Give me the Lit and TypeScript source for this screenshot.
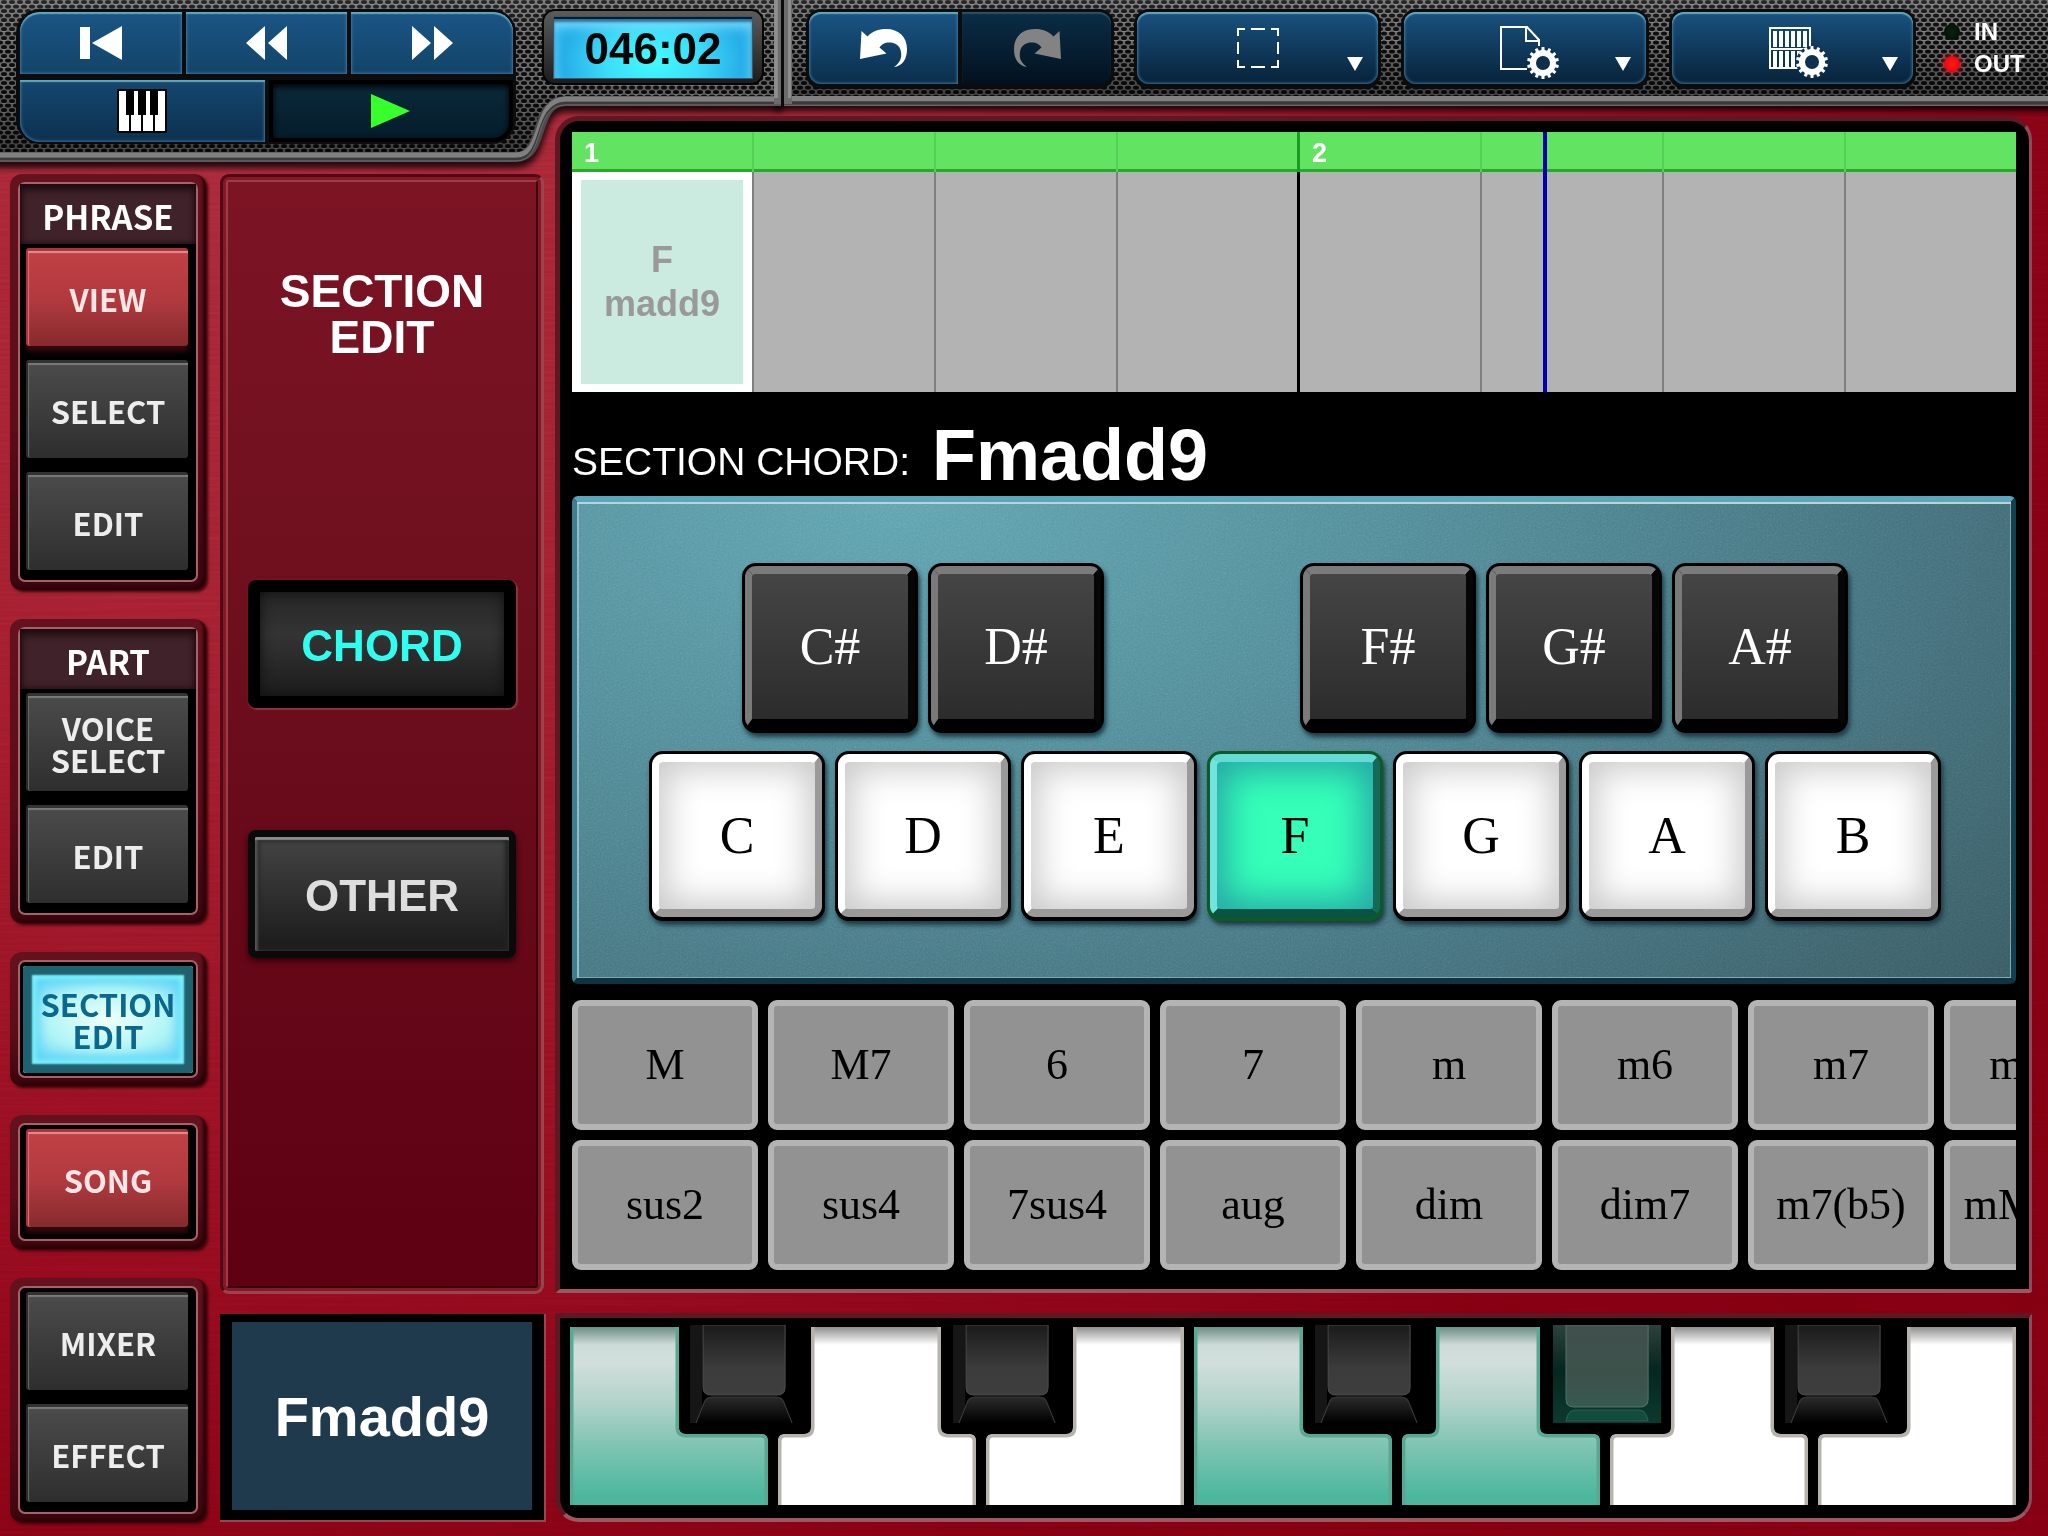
import { LitElement, html, svg, css } from "lit";
import { customElement, property } from "lit/decorators.js";
import { classMap } from "lit/directives/class-map.js";
import { styleMap } from "lit/directives/style-map.js";

const gearPoints = (cx: number, cy: number, teeth: number, outer: number, inner: number): string => {
  const points: string[] = [];
  const step = (Math.PI * 2) / teeth;
  for (let i = 0; i < teeth; i++) {
    const a = i * step - Math.PI / 2;
    const corners: [number, number][] = [
      [a - step * 0.28, inner],
      [a - step * 0.2, outer],
      [a + step * 0.2, outer],
      [a + step * 0.28, inner],
    ];
    for (const [t, r] of corners) {
      points.push(`${(cx + Math.cos(t) * r).toFixed(2)},${(cy + Math.sin(t) * r).toFixed(2)}`);
    }
  }
  return points.join(" ");
};

const gear = (cx: number, cy: number) => svg`<g stroke="none">
  <circle cx=${cx} cy=${cy} r="16" fill="#0d3350"></circle>
  <polygon points=${gearPoints(cx, cy, 14, 16, 13)} fill="#fff"></polygon>
  <circle cx=${cx} cy=${cy} r="7" fill="#0d304c"></circle></g>`;

const icons = {
  start: html`<svg width="42" height="34" viewBox="0 0 42 34" fill="#fff" aria-hidden="true">
    <rect y="1" width="10" height="32"></rect><path d="M12 17 42 0V34Z"></path></svg>`,
  rewind: html`<svg width="41" height="36" viewBox="0 0 41 36" fill="#fff" aria-hidden="true">
    <path d="M0 18 19 1V35ZM22 18 41 1V35Z"></path></svg>`,
  forward: html`<svg width="41" height="36" viewBox="0 0 41 36" fill="#fff" aria-hidden="true">
    <path d="M0 1 19 18 0 35ZM22 1 41 18 22 35Z"></path></svg>`,
  piano: html`<svg width="50" height="44" viewBox="0 0 50 44" aria-hidden="true">
    <rect width="50" height="44" fill="#050505"></rect>
    <path fill="#fff" d="M2 2H12V42H2ZM14 2H24V42H14ZM26 2H36V42H26ZM38 2H48V42H38Z"></path>
    <path fill="#000" d="M9 2H17V26H9ZM21 2H29V26H21ZM33 2H41V26H33Z"></path></svg>`,
  play: html`<svg width="40" height="36" viewBox="0 0 40 36" aria-hidden="true">
    <path fill="#36ff2b" d="M0 1 39 18 0 35Z"></path></svg>`,
  undo: html`<svg width="50" height="40" viewBox="0 0 50 40" fill="#fff" aria-hidden="true">
    <path d="M2.500 3 8.500 8.500C14 3 19 1 27 1 40 1 48 9 48 21 48 32 43 38 35 39 41 35 43 30 42 24 41 17 36 14.500 30 14.500 25.500 14.500 23 16 20.500 19.500L27.500 25.500 1 31Z"></path></svg>`,
  redo: html`<svg width="50" height="40" viewBox="0 0 50 40" fill="#838383" aria-hidden="true">
    <path d="M47.500 3 41.500 8.500C36 3 31 1 23 1 10 1 2 9 2 21 2 32 7 38 15 39 9 35 7 30 8 24 9 17 14 14.500 20 14.500 24.500 14.500 27 16 29.500 19.500L22.500 25.500 49 31Z"></path></svg>`,
  select: html`<svg width="42" height="40" viewBox="0 0 42 40" fill="none" stroke="#fff" stroke-width="2" aria-hidden="true">
    <path d="M1 8V1H8M14 1H28M34 1H41V8M41 14V26M41 32V39H34M28 39H14M8 39H1V32M1 26V14"></path></svg>`,
  file: html`<svg width="50" height="48" viewBox="0 0 50 48" overflow="visible" fill="none" stroke="#fff" stroke-width="2" aria-hidden="true">
    <path d="M27 45H1V3H27L39 16V22M26 3V17H39"></path>${gear(43, 39)}</svg>`,
  grid: html`<svg width="46" height="44" viewBox="0 0 46 44" overflow="visible" aria-hidden="true">
    <rect x="1" y="2" width="40" height="40" fill="none" stroke="#fff" stroke-width="2"></rect>
    <path stroke="#fff" stroke-width="4" d="M6 5V21M12 5V21M18 5V21M24 5V21M30 5V21M36 5V21M6 25V41M12 25V41M18 25V41M24 25V41M30 25V41"></path>
    <path stroke="#fff" stroke-width="2" d="M1 23H41"></path>${gear(43, 36)}</svg>`,
  caret: html`<svg width="16" height="14" viewBox="0 0 16 14" fill="#fff" aria-hidden="true"><path d="M0 0H16L8 14Z"></path></svg>`,
};

@customElement("chrome-plate")
export class ChromePlate extends LitElement {
  static styles = css`
    :host { display: block; position: absolute; inset: 0; }
    .plate { display: block; width: 100%; height: 190px; }
  `;

  render() {
    const edge = "M-10 157H516C546 157 532 101 566 101H782";
    return html`<svg class="plate" aria-hidden="true">
      <defs>
        <pattern id="mesh" width="8" height="9" patternUnits="userSpaceOnUse">
          <rect width="8" height="9" fill="#6d6d6d"></rect>
          <rect y="4" width="8" height="1" fill="#858585"></rect>
          <ellipse cx="4" cy="2" rx="3" ry="2" fill="#0d0d0d"></ellipse>
          <ellipse cx="0" cy="6.500" rx="3" ry="2" fill="#0d0d0d"></ellipse>
          <ellipse cx="8" cy="6.500" rx="3" ry="2" fill="#0d0d0d"></ellipse>
        </pattern>
        <linearGradient id="dim" x2="0" y2="1">
          <stop offset="0" stop-color="#fff" stop-opacity=".12"></stop>
          <stop offset=".4" stop-color="#000" stop-opacity="0"></stop>
          <stop offset="1" stop-color="#000" stop-opacity=".45"></stop>
        </linearGradient>
        <filter id="soft" x="-5%" y="-50%" width="110%" height="200%"><feGaussianBlur stdDeviation="3"></feGaussianBlur></filter>
      </defs>
      <path d=${edge} transform="translate(0 5)" fill="none" stroke="#000" stroke-opacity=".8" stroke-width="12" filter="url(#soft)"></path>
      <rect x="775" y="100" width="100%" height="11" fill="#000" opacity=".8" filter="url(#soft)"></rect>
      <path d="M0 0H782V101H566C532 101 546 157 516 157H0Z" fill="url(#mesh)"></path>
      <rect x="782" width="100%" height="101" fill="url(#mesh)"></rect>
      <path d="M0 0H782V101H566C532 101 546 157 516 157H0Z" fill="url(#dim)"></path>
      <rect x="782" width="100%" height="101" fill="url(#dim)"></rect>
      <g fill="none">
        <path d=${edge} stroke="#4b4b4b" stroke-width="10"></path>
        <path d=${edge} transform="translate(0 -2)" stroke="#808080" stroke-width="5"></path>
        <path d=${edge} transform="translate(0 2)" stroke="#3a3a3a" stroke-width="2"></path>
        <path d=${edge} transform="translate(0 4)" stroke="#686868" stroke-width="1"></path>
      </g>
      <rect x="784" y="96" width="100%" height="10" fill="#4b4b4b"></rect>
      <rect x="784" y="96" width="100%" height="5" fill="#808080"></rect>
      <rect x="784" y="102" width="100%" height="2" fill="#3a3a3a"></rect>
      <rect x="784" y="105" width="100%" height="1" fill="#686868"></rect>
      <rect x="774" width="8" height="104" fill="#6b6b6b"></rect>
      <rect x="774" width="4" height="98" fill="#8d8d8d"></rect>
      <rect x="784" width="8" height="104" fill="#6b6b6b"></rect>
      <rect x="788" width="3" height="98" fill="#8d8d8d"></rect>
      <rect x="781" width="3" height="107" fill="#0a0a0a"></rect>
    </svg>`;
  }
}

@customElement("top-bar")
export class TopBar extends LitElement {
  static styles = css`
    :host { display: block; position: relative; height: 162px; }
    .bar { position: relative; display: flex; align-items: flex-start; padding: 9px 22px 0 16px; }
    button {
      display: flex; align-items: center; justify-content: center; margin: 0; padding: 0; border: 0;
      background: linear-gradient(#1a5585, #124468);
      box-shadow: inset 0 2px 1px #5da9be, inset 0 0 3px 1px #3c7398;
    }
    .transport {
      flex: none; width: 500px; box-sizing: border-box; display: grid; grid-template-columns: repeat(6, 1fr);
      gap: 6px 4px; padding: 3px 3px 2px 4px; grid-auto-rows: 62px; background: #0c0c0e; border-radius: 24px;
    }
    .third { grid-column: span 2; }
    .half { grid-column: span 3; }
    .first { border-top-left-radius: 20px; }
    .last { border-top-right-radius: 20px; }
    .keys { border-bottom-left-radius: 20px; background: linear-gradient(#15466f, #0c3150); }
    .play {
      border-bottom-right-radius: 20px; border: 4px solid #000;
      background: linear-gradient(#0a2a3a, #051c2b); box-shadow: inset 0 3px 6px #000;
    }
    .lcd {
      flex: none; margin-left: 26px; width: 222px; height: 76px; box-sizing: border-box; padding: 6px 10px 5px;
      border: 2px solid #050505; border-radius: 13px; background: linear-gradient(#5c5c5c, #1c1c1c);
    }
    .time {
      display: block; height: 59px; text-align: center; color: #050505;
      font: bold 44px/60px "Liberation Sans", Arial, sans-serif;
      background: radial-gradient(ellipse 45% 110% at 50% 70%, #43fbff, #3bdcf8 55%, #27aee8);
      box-shadow: inset 0 3px 3px #2a6f9a, 0 0 0 1px #39566a, inset 0 8px 12px #7cdcff;
      border-top: 2px solid #0b1c28;
    }
    .tools { flex: 1; display: flex; align-items: flex-start; gap: 20px; margin-left: 42px; }
    .group {
      display: flex; gap: 4px; box-sizing: border-box; height: 80px; padding: 3px 3px 5px;
      background: #0b0c0e; border-radius: 15px;
    }
    .history { flex: none; width: 308px; }
    .history button { flex: 1; background: linear-gradient(#1a5585, #0a2e4b); }
    .undo { border-radius: 12px 0 0 12px; }
    .history .redo { border-radius: 0 12px 12px 0; background: linear-gradient(#0a2d47, #03111f); box-shadow: inset 0 2px 1px #2a5262; }
    .menu { flex: 1; }
    .menu button {
      flex: 1; display: grid; grid-template-columns: 1fr auto 1fr; padding: 0 15px; border-radius: 12px;
      background: linear-gradient(#19527f, #07223a);
    }
    .icon { grid-column: 2; display: flex; }
    .caret { justify-self: end; align-self: end; display: flex; padding-bottom: 13px; }
    .leds {
      flex: none; display: grid; grid-template-columns: 16px auto; gap: 4px 14px; align-items: center;
      width: 82px; margin: 9px 0 0 8px; color: #fff; font: bold 24px/28px "Liberation Sans", Arial, sans-serif;
    }
    .led { width: 16px; height: 16px; border-radius: 50%; background: radial-gradient(#07230b, #020d03); }
    .lit { background: radial-gradient(#ff1a1a, #e00010); box-shadow: 0 0 6px 1px #d0202c; }
    .word { white-space: nowrap; }
  `;

  private menu(label: string, icon: unknown) {
    return html`<div class="group menu"><button aria-label=${label} aria-haspopup="menu">
      <span class="icon">${icon}</span><span class="caret">${icons.caret}</span></button></div>`;
  }

  render() {
    return html`<chrome-plate></chrome-plate>
      <div class="bar">
        <div class="transport">
          <button class="third first" aria-label="Return to start">${icons.start}</button>
          <button class="third" aria-label="Rewind">${icons.rewind}</button>
          <button class="third last" aria-label="Fast forward">${icons.forward}</button>
          <button class="half keys" aria-label="Keyboard">${icons.piano}</button>
          <button class="half play" aria-label="Play" aria-pressed="true">${icons.play}</button>
        </div>
        <div class="lcd"><output class="time">046:02</output></div>
        <div class="tools">
          <div class="group history">
            <button class="undo" aria-label="Undo">${icons.undo}</button>
            <button class="redo" aria-label="Redo">${icons.redo}</button>
          </div>
          ${this.menu("Selection", icons.select)}
          ${this.menu("File settings", icons.file)}
          ${this.menu("Grid settings", icons.grid)}
          <div class="leds">
            <span class="led"></span><span class="word">IN</span>
            <span class="led lit"></span><span class="word">OUT</span>
          </div>
        </div>
      </div>`;
  }
}

type NavItem = { lines: string[]; tone: "dark" | "red" | "lit" };
type NavGroup = { title?: string; items: NavItem[] };

const NAV: NavGroup[] = [
  {
    title: "PHRASE",
    items: [
      { lines: ["VIEW"], tone: "red" },
      { lines: ["SELECT"], tone: "dark" },
      { lines: ["EDIT"], tone: "dark" },
    ],
  },
  {
    title: "PART",
    items: [
      { lines: ["VOICE", "SELECT"], tone: "dark" },
      { lines: ["EDIT"], tone: "dark" },
    ],
  },
  { items: [{ lines: ["SECTION", "EDIT"], tone: "lit" }] },
  { items: [{ lines: ["SONG"], tone: "red" }] },
  {
    items: [
      { lines: ["MIXER"], tone: "dark" },
      { lines: ["EFFECT"], tone: "dark" },
    ],
  },
];

@customElement("side-nav")
export class SideNav extends LitElement {
  static styles = css`
    :host { display: block; }
    .nav { display: flex; flex-direction: column; gap: 29px; font: bold 31px/32px "Noto Sans CJK JP", "Liberation Sans", sans-serif; }
    .frame {
      padding: 8px; border-radius: 12px; background: linear-gradient(#64121d, #5c0d18 60%, #3a060d);
      box-shadow: 2px 2px 3px 0 #3d0309, inset -3px -3px 3px #2a0307;
    }
    .well {
      display: flex; flex-direction: column; gap: 14px; padding: 4px 8px 10px 6px;
      border: 2px solid #a9606a; border-radius: 7px; background: #000;
    }
    .titled { padding-top: 0; gap: 14px; }
    .title {
      margin: 0 -8px -10px -6px; height: 60px; line-height: 64px; color: #fff; text-align: center; font-size: 33px;
      background: #40232a; box-shadow: inset 0 5px 8px #1b0a0d, inset 0 0 6px #1b0a0d;
      font-weight: bold;
    }
    button {
      height: 98px; margin: 0; padding: 0; border: 0; border-radius: 3px; font: inherit; color: #ededed;
      border-top: 3px solid #333; border-left: 2px solid #2a2a2a;
    }
    .line { display: block; }
    .dark { background: linear-gradient(#4b4b4b, #2e2e2e); box-shadow: inset 0 3px 1px -1px #7a7a7a, inset 2px 0 1px -1px #6a6a6a; }
    .red {
      background: linear-gradient(#c04045, #b23a3f 50%, #862a2d); color: #fbe6e6; border-color: #a8353b;
      box-shadow: inset 0 3px 1px -1px #e48b8e, inset 2px 0 1px -1px #dd7478, 0 6px 4px #30090c;
    }
    .lit {
      height: 107px; margin: 0 -5px -9px -3px; color: #0c678d; border: 0;
      background: radial-gradient(ellipse 75% 60% at 50% 50%, #f0fff9, #aef4f6 50%, #45c3f6);
      box-shadow: inset 0 0 2px 9px #21606f, inset 0 0 5px 13px #7df3fb, inset 0 0 12px 16px #5cd4f8;
    }
    .single { padding-bottom: 12px; }
  `;

  render() {
    return html`<nav class="nav">
      ${NAV.map(
        (group) => html`<div class="frame">
          <div class=${classMap({ well: true, titled: !!group.title, single: group.items.length === 1 })}>
            ${group.title ? html`<div class="title">${group.title}</div>` : ""}
            ${group.items.map(
              (item) => html`<button class=${item.tone}>${item.lines.map((l) => html`<span class="line">${l}</span>`)}</button>`,
            )}
          </div>
        </div>`,
      )}
    </nav>`;
  }
}

@customElement("section-panel")
export class SectionPanel extends LitElement {
  static styles = css`
    :host { display: flex; flex-direction: column; gap: 20px; padding-bottom: 2px; font-family: "Liberation Sans", Arial, sans-serif; }
    .outer {
      flex: 1; display: flex; padding: 3px; border: 3px solid; border-color: #4d0b16 #9a4450 #9a4450 #4d0b16;
      border-radius: 9px; background: #8a1625;
    }
    .inner {
      flex: 1; display: flex; flex-direction: column; align-items: center; border: 2px solid;
      border-color: #96404c #36050c #2c0308 #96404c; border-radius: 3px;
      background: linear-gradient(#7c1424, #6e0f1e 40%, #5e0012);
    }
    .heading { margin: 86px 0 0; color: #fff; font-size: 46px; line-height: 46px; text-align: center; width: min-content; }
    button { box-sizing: border-box; width: 268px; height: 128px; padding: 3px 0 0; border-radius: 8px; font: bold 44px/50px "Liberation Sans", Arial, sans-serif; }
    .chord {
      margin: 220px 0 0; color: #2fffef; border: 12px solid #000; background: linear-gradient(#252525, #343434 40%, #1c1c1c);
      box-shadow: inset 0 0 12px #101010, 1px 1px 1px 1px #8e3340;
    }
    .other {
      margin: 122px 0 0; color: #dedede; border: 7px solid #0a0a0a; background: linear-gradient(#444, #1b1b1b);
      box-shadow: inset 0 3px 1px #8a8a8a, inset 3px 0 2px #4d4d4d, inset 0 0 4px 4px #222, 0 3px 6px #2d0207;
    }
    .display {
      box-sizing: border-box; height: 206px; display: flex; align-items: center; justify-content: center;
      border: solid #000; border-width: 8px 12px 10px; background: #1e3a4c; color: #fff; font-size: 56px; font-weight: bold;
      box-shadow: 1px 1px 0 1px #9c4450;
    }
  `;

  render() {
    return html`<div class="outer"><div class="inner">
        <h1 class="heading">SECTION EDIT</h1>
        <button class="chord" aria-pressed="true">CHORD</button>
        <button class="other">OTHER</button>
      </div></div>
      <output class="display">Fmadd9</output>`;
  }
}

@customElement("chord-timeline")
export class ChordTimeline extends LitElement {
  @property({ type: Number }) beat = 5.335;

  static styles = css`
    :host { display: block; position: relative; overflow: hidden; height: 260px; background: #b3b3b3; font-family: "Liberation Sans", Arial, sans-serif; }
    .row { display: flex; }
    .cell { flex: none; box-sizing: border-box; width: 182px; border-right: 2px solid #7f7f7f; height: 220px; }
    .head .cell { height: 40px; border-color: #55cf55; padding-left: 12px; color: #fff; font: bold 27px/42px "Liberation Sans", Arial, sans-serif; }
    .head { background: #62e362; box-shadow: inset 0 -3px 0 #2ba82b; }
    .bar { border-right: 3px solid #000; }
    .head .bar { border-color: #1c9b22; }
    .chosen { background: #fff; padding: 8px 9px 8px 9px; }
    .chord {
      width: 100%; height: 100%; display: flex; flex-direction: column; align-items: center; justify-content: center; padding: 0;
      border: 0; background: #ccebe0; color: #999; font: bold 36px/44px "Liberation Sans", Arial, sans-serif;
    }
    .playhead { position: absolute; top: 0; bottom: 0; width: 4px; background: #0000ad; }
  `;

  render() {
    const cells = [0, 1, 2, 3, 4, 5, 6, 7];
    const kind = (i: number) => classMap({ cell: true, bar: i % 4 === 3, chosen: i === 0 });
    return html`<div class="row head">
        ${cells.map((i) => html`<div class=${classMap({ cell: true, bar: i % 4 === 3 })}>${i % 4 === 0 ? i / 4 + 1 : ""}</div>`)}
      </div>
      <div class="row">
        ${cells.map(
          (i) => html`<div class=${kind(i)}>${i === 0 ? html`<button class="chord"><span>F</span><span>madd9</span></button>` : ""}</div>`,
        )}
      </div>
      <div class="playhead" style=${styleMap({ left: `${Math.round(this.beat * 182)}px` })}></div>`;
  }
}

const ROOTS: { name: string; col: number; sharp?: boolean }[] = [
  { name: "C#", col: 2, sharp: true },
  { name: "D#", col: 4, sharp: true },
  { name: "F#", col: 8, sharp: true },
  { name: "G#", col: 10, sharp: true },
  { name: "A#", col: 12, sharp: true },
  { name: "C", col: 1 },
  { name: "D", col: 3 },
  { name: "E", col: 5 },
  { name: "F", col: 7 },
  { name: "G", col: 9 },
  { name: "A", col: 11 },
  { name: "B", col: 13 },
];

const KINDS: string[][] = [
  ["M", "M7", "6", "7", "m", "m6", "m7", "mM7"],
  ["sus2", "sus4", "7sus4", "aug", "dim", "dim7", "m7(b5)", "mM7(9)"],
];

@customElement("chord-editor")
export class ChordEditor extends LitElement {
  static styles = css`
    :host { flex: 1; display: flex; flex-direction: column; font-family: "Liberation Serif", "Times New Roman", serif; }
    .pad {
      flex: 1; position: relative; display: grid; align-content: center; justify-content: center; box-sizing: border-box;
      grid-template-columns: repeat(14, minmax(0, 83px)); grid-auto-rows: 170px; gap: 18px 10px; padding: 4px 0 0 2px;
      border: solid; border-width: 6px 5px; border-color: #5aa6ba #12404c #10343f #3d7f90; border-radius: 6px;
      background: radial-gradient(ellipse 100% 160% at 22% 0, #5fa2af, #528a97 35%, #477480 65%, #3a5a62);
      box-shadow: inset 0 2px 0 #b9cfd3, inset 2px 0 0 #8cb6be, inset -1px -1px 0 #78a0a8;
    }
    .grain { position: absolute; inset: 0; width: 100%; height: 100%; opacity: 0.3; mix-blend-mode: overlay; }
    .root {
      position: relative; margin: 0; padding: 0; grid-column-end: span 2; border-radius: 14px; font: 52px/60px "Liberation Serif", "Times New Roman", serif;
      border: 3px solid #000; border-bottom-width: 4px; color: #000; background: #000;
      display: flex; align-items: center; justify-content: center; box-shadow: 2px 4px 5px #1b3a44;
    }
    .face {
      flex: 1; align-self: stretch; display: flex; align-items: center; justify-content: center; border: solid; border-width: 8px 7px;
      border-radius: 11px; border-color: #fff #9a9a9a #9a9a9a #fff;
      background: #fff; box-shadow: inset 0 0 34px 7px #cac8c8;
    }
    .sharp { color: #fff; }
    .sharp .face {
      border-color: #7b7b7b #060606 #000 #7a7a7a; border-bottom-width: 10px;
      background: linear-gradient(#454545, #2c2c2c); box-shadow: none;
    }
    .active { border-color: #0c5b26; background: #0c5b26; }
    .active .face {
      border-color: #64dcd5 #17685a #0a5245 #72e3de; background: #35ffb9; box-shadow: inset 0 0 34px 10px #26a9a6;
    }
    .kinds { display: grid; gap: 10px; margin-top: 16px; overflow: hidden; }
    .row { display: flex; gap: 10px; }
    .kind {
      flex: none; box-sizing: border-box; width: 186px; height: 130px; margin: 0; padding: 0; border: 6px solid #b4b4b4; border-radius: 9px;
      background: #929292; color: #000; font: 44px/50px "Liberation Serif", "Times New Roman", serif; white-space: nowrap;
    }
  `;

  render() {
    return html`<div class="pad">
        <svg class="grain" aria-hidden="true">
          <filter id="grain"><feTurbulence type="fractalNoise" baseFrequency="0.6" numOctaves="2"></feTurbulence><feColorMatrix type="saturate" values="0"></feColorMatrix></filter>
          <rect width="100%" height="100%" filter="url(#grain)"></rect>
        </svg>
        ${ROOTS.map(
          (r) => html`<button
            class=${classMap({ root: true, sharp: !!r.sharp, active: r.name === "F" })}
            style=${styleMap({ gridColumnStart: String(r.col), gridRow: r.sharp ? "1" : "2" })}
          ><span class="face">${r.name}</span></button>`,
        )}
      </div>
      <div class="kinds">
        ${KINDS.map((row) => html`<div class="row">${row.map((k) => html`<button class="kind">${k}</button>`)}</div>`)}
      </div>`;
  }
}

type WhiteKey = { note: string; left: number; right: number; on?: boolean };
const WHITES: WhiteKey[] = [
  { note: "C", left: 0, right: 109, on: true },
  { note: "D", left: 33, right: 163 },
  { note: "E", left: 87, right: 198 },
  { note: "F", left: 0, right: 109, on: true },
  { note: "G", left: 34, right: 138, on: true },
  { note: "A", left: 61, right: 164 },
  { note: "B", left: 89, right: 198 },
];
const BLACKS: { note: string; x: number; on?: boolean }[] = [
  { note: "C#", x: 109 },
  { note: "D#", x: 372 },
  { note: "F#", x: 733 },
  { note: "G#", x: 970, on: true },
  { note: "A#", x: 1203 },
];

@customElement("piano-keys")
export class PianoKeys extends LitElement {
  static styles = css`
    :host { display: block; position: relative; }
    .whites { display: grid; grid-template-columns: repeat(7, 1fr); gap: 10px; }
    button { display: block; margin: 0; padding: 0; border: 0; background: none; }
    .shape { display: block; width: 100%; height: 178px; }
    .black { position: absolute; top: -2px; width: 9%; height: 108px; }
    .cap { display: block; width: 100%; height: 108px; }
  `;

  private white(k: WhiteKey) {
    const cut = 107;
    const start = k.left > 0
      ? `M0 184V${cut + 7}Q0 ${cut} 7 ${cut}H${k.left - 7}Q${k.left} ${cut} ${k.left} ${cut - 7}V-6`
      : "M0 184V-6";
    const end = k.right < 198
      ? `H${k.right}V${cut - 7}Q${k.right} ${cut} ${k.right + 7} ${cut}H191Q198 ${cut} 198 ${cut + 7}V184Z`
      : "H198V184Z";
    const fill = `fill-${k.note}`;
    const edge = `edge-${k.note}`;
    return html`<button aria-label=${k.note}>
      <svg class="shape" viewBox="0 0 198 178" preserveAspectRatio="none" aria-hidden="true">
        <defs>
          <linearGradient id=${fill} gradientUnits="userSpaceOnUse" x1="0" x2="0" y1="0" y2="178">
            <stop offset="0" stop-color=${k.on ? "#6b8e84" : "#8f8f8f"}></stop>
            <stop offset=".1" stop-color=${k.on ? "#cddbd7" : "#fff"}></stop>
            <stop offset=".2" stop-color=${k.on ? "#d2dedb" : "#fff"}></stop>
            <stop offset=".42" stop-color=${k.on ? "#b4d3cb" : "#fff"}></stop>
            <stop offset=".65" stop-color=${k.on ? "#83c5b4" : "#fff"}></stop>
            <stop offset=".95" stop-color=${k.on ? "#4cb79d" : "#fff"}></stop>
          </linearGradient>
          <clipPath id=${edge}><path d=${start + end}></path></clipPath>
        </defs>
        <path d=${start + end} fill="url(#${fill})" stroke=${k.on ? "#58a892" : "#b5b3ab"} stroke-width="7" clip-path="url(#${edge})"></path>
      </svg>
    </button>`;
  }

  private black(k: { note: string; x: number; on?: boolean }) {
    const id = k.note.charAt(0).toLowerCase();
    const art = k.on
      ? svg`<rect x="12" y="0" width="108" height="98" fill="url(#body-${id})"></rect>
          <path d="M25 0H107V74Q107 82 99 82H33Q25 82 25 74Z" fill="url(#face-${id})" stroke="#55716a" stroke-width="1"></path>
          <path d="M25 96Q27 85 34 85H98Q105 85 107 96Z" fill="#124c3f" stroke="#2b5f52" stroke-width="1"></path>`
      : svg`<rect x="11" y="0" width="12" height="98" fill="#161616"></rect>
          <path d="M24 0H106V62Q106 70 98 70H32Q24 70 24 62Z" fill="url(#face-${id})" stroke="#4d4d4d" stroke-width="1"></path>
          <path d="M17 98 25 78Q27 72 33 72H97Q103 72 105 78L113 98Z" fill="url(#lip-${id})"></path>
          <path d="M17 98 25 78Q27 72 33 72H97Q103 72 105 78L113 98" fill="none" stroke="#3c3c3c" stroke-width="1"></path>`;
    return html`<button class="black" aria-label=${k.note} style=${styleMap({ left: `${(k.x / 14.45).toFixed(2)}%` })}>
      <svg class="cap" viewBox="0 0 130 108" preserveAspectRatio="none" aria-hidden="true">
        <defs>
          <linearGradient id="face-${id}" x2="0" y2="1">
            <stop offset="0" stop-color=${k.on ? "#40504c" : "#1b1b1b"}></stop>
            <stop offset=".6" stop-color=${k.on ? "#3d514b" : "#3b3b3b"}></stop>
            <stop offset="1" stop-color=${k.on ? "#375a50" : "#3e3e3e"}></stop>
          </linearGradient>
          <linearGradient id="lip-${id}" x2="0" y2="1">
            <stop offset="0" stop-color="#2b2b2b"></stop><stop offset="1" stop-color="#000"></stop>
          </linearGradient>
          <linearGradient id="body-${id}" x2="0" y2="1">
            <stop offset="0" stop-color="#2c413c"></stop><stop offset=".45" stop-color="#04271e"></stop><stop offset="1" stop-color="#0b3a2e"></stop>
          </linearGradient>
        </defs>
        <path d="M0 0H130V101Q130 108 123 108H7Q0 108 0 101Z" fill="#000"></path>${art}
      </svg>
    </button>`;
  }

  render() {
    return html`<div class="whites">${WHITES.map((k) => this.white(k))}</div>
      ${BLACKS.map((k) => this.black(k))}`;
  }
}

@customElement("app-root")
export class AppRoot extends LitElement {
  static styles = css`
    :host {
      display: flex; flex-direction: column; position: relative; min-height: 100vh; overflow: hidden;
      background: radial-gradient(ellipse 95% 110% at 12% 0%, #ac2a3a, #a31c2c 40%, #950a1c 75%, #82000f);
      font-family: "Liberation Sans", Arial, sans-serif;
    }
    .brush { position: absolute; inset: 0; width: 100%; height: 100%; opacity: 0.35; mix-blend-mode: soft-light; }
    .deck {
      flex: 1; position: relative; display: grid; grid-template-columns: 196px 324px minmax(0, 1fr);
      column-gap: 14px; padding: 12px 16px 14px 10px;
    }
    .main { display: flex; flex-direction: column; gap: 20px; margin: -58px 0 0 -3px; }
    .screen, .keyboard {
      border: solid; border-width: 5px 3px 4px 5px; border-color: #5f1822 #96485a #a05560 #5f1822; background: #000;
    }
    .screen { flex: 1; display: flex; flex-direction: column; padding: 11px 13px 19px 12px; border-radius: 24px 24px 3px 3px; }
    .keyboard { padding: 9px 13px 13px 10px; border-radius: 3px 3px 24px 24px; }
    .readout { display: flex; align-items: flex-end; gap: 22px; height: 104px; color: #fff; }
    .label { font-size: 39px; line-height: 68px; }
    .value { margin: 0; font-size: 72px; line-height: 82px; font-weight: bold; }
  `;

  render() {
    return html`<svg class="brush" aria-hidden="true">
        <filter id="brush"><feTurbulence type="fractalNoise" baseFrequency="0.004 0.35" numOctaves="3"></feTurbulence><feColorMatrix type="saturate" values="0"></feColorMatrix></filter>
        <rect width="100%" height="100%" filter="url(#brush)"></rect>
      </svg>
      <top-bar></top-bar>
      <div class="deck">
        <side-nav></side-nav>
        <section-panel></section-panel>
        <main class="main">
          <section class="screen">
            <chord-timeline></chord-timeline>
            <div class="readout"><span class="label">SECTION CHORD:</span><h2 class="value">Fmadd9</h2></div>
            <chord-editor></chord-editor>
          </section>
          <section class="keyboard"><piano-keys></piano-keys></section>
        </main>
      </div>`;
  }
}
